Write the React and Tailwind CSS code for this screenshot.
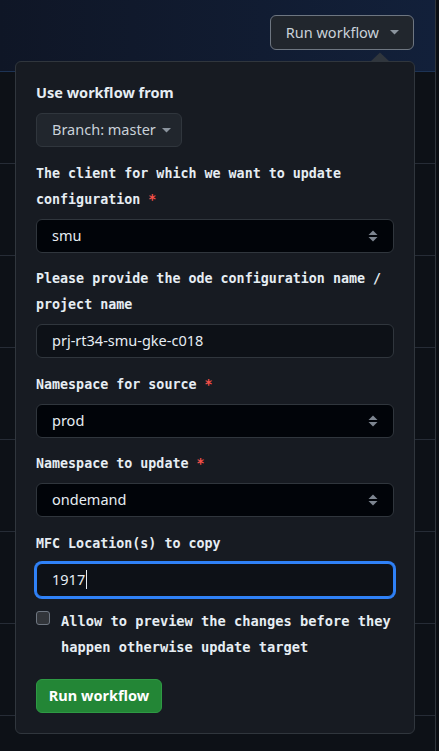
import React from "react";

const sans = { fontFamily: '"Noto Sans", "Liberation Sans", sans-serif' };
const mono = { fontFamily: '"DejaVu Sans Mono", "Liberation Mono", monospace' };

function Caret({ className = "" }) {
  return (
    <svg width="9" height="5" viewBox="0 0 9 5" className={className}>
      <path d="M0 0 L9 0 L4.5 4.5 Z" fill="#8b949e" />
    </svg>
  );
}

function UpDown() {
  return (
    <svg width="10" height="12" viewBox="0 0 10 12">
      <path d="M0.5 5 L5 0.5 L9.5 5 Z" fill="#7d8590" />
      <path d="M0.5 7 L5 11.5 L9.5 7 Z" fill="#7d8590" />
    </svg>
  );
}

function Label({ children, required }) {
  return (
    <div
      className="mt-[13.5px] text-[13.33px] font-bold leading-[26px] text-[#e6edf3]"
      style={mono}
    >
      {children}
      {required && (
        <>
          {" "}
          <span className="text-[#f85149]">*</span>
        </>
      )}
    </div>
  );
}

function Select({ value }) {
  return (
    <div className="mt-[6px] flex h-[34px] items-center justify-between rounded-[6px] border border-[#30363d] bg-[#010409] pl-[15px] pr-[15px] text-[14.5px] text-[#e6edf3]">
      <span>{value}</span>
      <UpDown />
    </div>
  );
}

function Input({ value }) {
  return (
    <div className="mt-[6px] flex h-[34px] items-center rounded-[6px] border border-[#30363d] bg-[#0d1117] pl-[15px] text-[14.5px] text-[#e6edf3]">
      {value}
    </div>
  );
}

export default function App() {
  const rows = [0, 1, 2, 3, 4, 5, 6];
  return (
    <div className="relative h-[751px] w-[439px] overflow-hidden bg-[#0b0e13]" style={sans}>
      <div className="h-[751px] w-[436px] border-r border-[#30363d] bg-[#0d1117]">
        <div className="flex h-[72px] items-start justify-end border-b border-[#1d3354] bg-gradient-to-r from-[#0f1626] to-[#12203a] pr-[21px] pt-[15px]">
          <div className="flex h-[35px] items-center gap-[11px] rounded-[6px] border border-[#6e7681] bg-[#21262d] pl-[15px] pr-[14px] text-[14.5px] text-[#c9d1d9]">
            <span>Run workflow</span>
            <Caret />
          </div>
        </div>
        {rows.map((r) => (
          <div key={r} className="h-[92px] border-b border-[#262c36]" />
        ))}
      </div>

      <div className="absolute left-[15px] top-[61px] w-[400px] rounded-[6px] border border-[#30363d] bg-[#171b22] px-[20px] pb-[20px] pt-[20px]">
        <svg
          width="20"
          height="10"
          viewBox="0 0 20 10"
          className="absolute left-[354px] top-[-10px]"
        >
          <path d="M0 10 L10 0.5 L20 10 Z" fill="#30363d" />
        </svg>

        <div className="text-[14.5px] font-bold leading-[20px] text-[#e6edf3]">
          Use workflow from
        </div>
        <div className="mt-[11px] flex h-[34px] w-[146px] items-center gap-[6px] rounded-[6px] border border-[#30363d] bg-[#21262d] pl-[15px] text-[14.5px] text-[#c9d1d9]">
          <span>Branch: master</span>
          <Caret />
        </div>

        <Label required>
          <span>The client for which we want to update</span>{" "}
          <span>configuration</span>
        </Label>
        <Select value="smu" />

        <Label>
          <span>Please provide the ode configuration name /</span>{" "}
          <span>project name</span>
        </Label>
        <Input value="prj-rt34-smu-gke-c018" />

        <Label required>Namespace for source</Label>
        <Select value="prod" />

        <Label required>Namespace to update</Label>
        <Select value="ondemand" />

        <Label>MFC Location(s) to copy</Label>
        <div className="mt-[6px] flex h-[34px] items-center rounded-[6px] border border-[#2f81f7] bg-[#0d1117] pl-[15px] text-[14.5px] text-[#e6edf3] ring-2 ring-[#2f81f7]">
          <span>1917</span>
          <span className="ml-[1px] h-[19px] w-[1px] bg-[#e6edf3]" />
        </div>

        <div className="mt-[11.5px] flex items-start gap-[11px]">
          <div className="mt-[3px] h-[14px] w-[14px] shrink-0 rounded-[3px] border border-[#6e7681] bg-[#32353a]" />
          <div
            className="text-[13.7px] font-bold leading-[26px] text-[#e6edf3]"
            style={mono}
          >
            <span>Allow to preview the changes before they</span>{" "}
            <span>happen otherwise update target</span>
          </div>
        </div>

        <div className="mt-[19px] flex h-[34px] w-[126px] items-center justify-center rounded-[6px] border border-[#2e9a44] bg-[#238636] text-[14.5px] font-bold text-white">
          Run workflow
        </div>
      </div>
    </div>
  );
}
